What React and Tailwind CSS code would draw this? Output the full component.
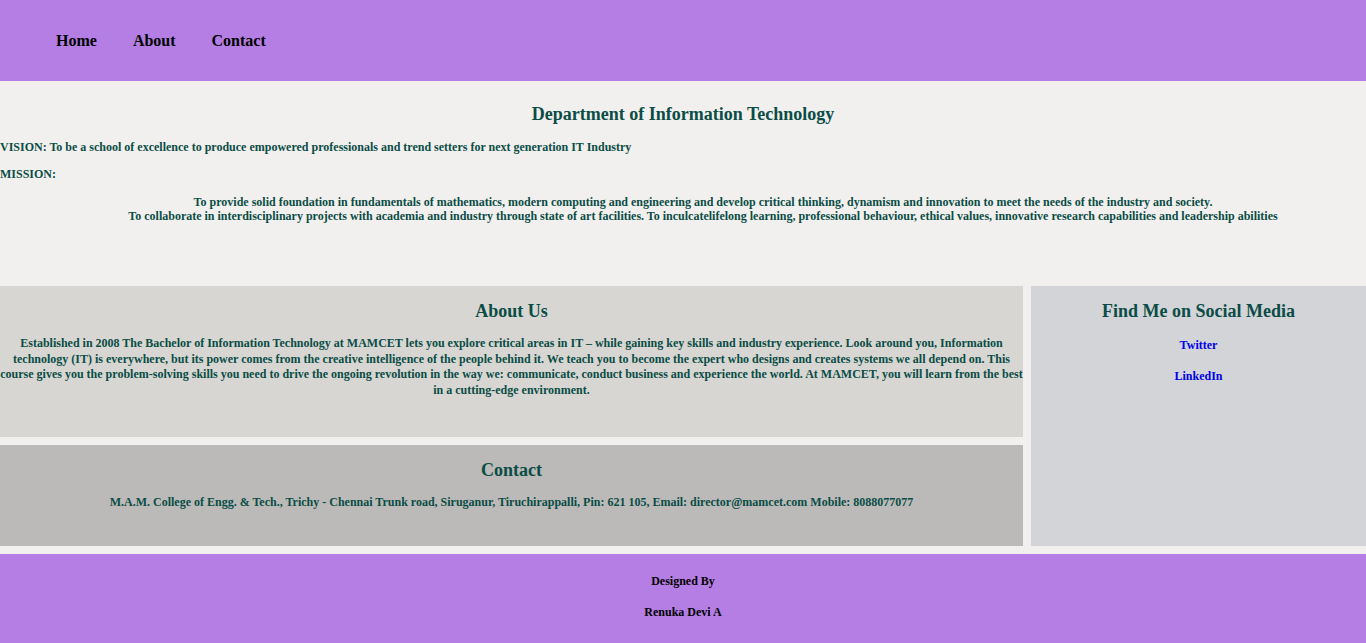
import React from 'react';

const serif = "font-['Liberation_Serif','Times_New_Roman',serif]";

export default function App() {
  return (
    <div className={`${serif} min-h-[643px] bg-[#f2f0ee] text-[#0b4d46] font-bold`}>
      {/* header nav */}
      <header className="h-[81px] bg-[#b57ee5] flex items-center pl-[56px]">
        <nav className="flex gap-[36px] text-[16px] text-black">
          <a href="#">Home</a>
          <a href="#">About</a>
          <a href="#">Contact</a>
        </nav>
      </header>

      {/* department intro */}
      <section className="h-[205px] pt-[21px]">
        <h1 className="text-center text-[18px] leading-[24px]">Department of Information Technology</h1>
        <p className="mt-[14px] text-[12px] leading-[14px]">
          VISION: To be a school of excellence to produce empowered professionals and trend setters for next generation IT Industry
        </p>
        <p className="mt-[13px] text-[12px] leading-[14px]">MISSION:</p>
        <ul className="mt-[14px] pl-[40px] text-center text-[12px] leading-[14px]">
          <li>To provide solid foundation in fundamentals of mathematics, modern computing and engineering and develop critical thinking, dynamism and innovation to meet the needs of the industry and society.</li>
          <li>To collaborate in interdisciplinary projects with academia and industry through state of art facilities. To inculcatelifelong learning, professional behaviour, ethical values, innovative research capabilities and leadership abilities</li>
        </ul>
      </section>

      {/* about / contact / social */}
      <div className="flex gap-[8px]">
        <div className="w-[1023px] flex flex-col gap-[8px]">
          <section className="h-[151px] bg-[#d7d6d2] pt-[14px] text-center">
            <h2 className="text-[18px] leading-[22px]">About Us</h2>
            <p className="mt-[14px] text-[12px] leading-[15.5px]">
              Established in 2008 The Bachelor of Information Technology at MAMCET lets you explore critical areas in IT – while gaining key skills and industry experience. Look around you, Information technology (IT) is everywhere, but its power comes from the creative intelligence of the people behind it. We teach you to become the expert who designs and creates systems we all depend on. This course gives you the problem-solving skills you need to drive the ongoing revolution in the way we: communicate, conduct business and experience the world. At MAMCET, you will learn from the best in a cutting-edge environment.
            </p>
          </section>
          <section className="h-[101px] bg-[#bbbab8] pt-[14px] text-center">
            <h2 className="text-[18px] leading-[22px]">Contact</h2>
            <p className="mt-[14px] text-[12px] leading-[14px]">
              M.A.M. College of Engg. &amp; Tech., Trichy - Chennai Trunk road, Siruganur, Tiruchirappalli, Pin: 621 105, Email: director@mamcet.com Mobile: 8088077077
            </p>
          </section>
        </div>
        <aside className="flex-1 h-[260px] bg-[#d3d4d8] pt-[14px] text-center">
          <h2 className="text-[18px] leading-[22px]">Find Me on Social Media</h2>
          <div className="mt-[16px] flex flex-col gap-[17px] text-[12px] leading-[14px] text-[#0000ee]">
            <a href="#">Twitter</a>
            <a href="#">LinkedIn</a>
          </div>
        </aside>
      </div>

      {/* footer */}
      <footer className="mt-[8px] h-[89px] bg-[#b57ee5] text-black text-center text-[12px] leading-[14px] pt-[20px]">
        <p>Designed By</p>
        <p className="mt-[17px]">Renuka Devi A</p>
      </footer>
    </div>
  );
}
